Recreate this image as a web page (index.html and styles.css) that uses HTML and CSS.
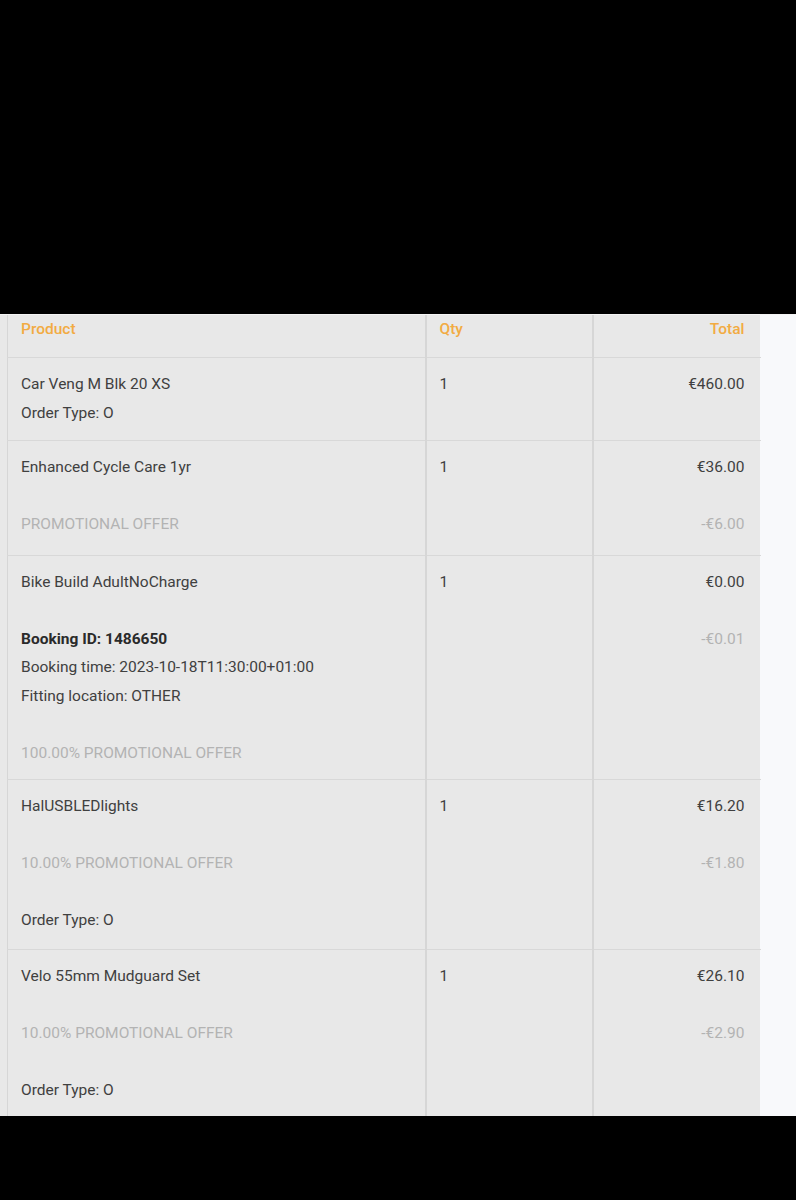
FILE: index.html
```html
<!DOCTYPE html>
<html lang="en">
<head>
<meta charset="utf-8">
<title>Order items</title>
<link rel="stylesheet" href="styles.css">
</head>
<body>
<div class="bar-top"></div>
<div class="screen">
  <div class="sheet">
    <table class="items">
      <colgroup>
        <col class="c-prod"><col class="c-qty"><col class="c-total">
      </colgroup>
      <thead>
        <tr>
          <th class="prod">Product</th>
          <th class="qty">Qty</th>
          <th class="total">Total</th>
        </tr>
      </thead>
      <tbody>
        <tr>
          <td class="prod">
            <div class="ln">Car Veng M Blk 20 XS</div>
            <div class="ln">Order Type: O</div>
          </td>
          <td class="qty"><div class="ln">1</div></td>
          <td class="total"><div class="ln">€460.00</div></td>
        </tr>
        <tr class="r2">
          <td class="prod">
            <div class="ln">Enhanced Cycle Care 1yr</div>
            <div class="gap"></div>
            <div class="ln promo">PROMOTIONAL OFFER</div>
          </td>
          <td class="qty"><div class="ln">1</div></td>
          <td class="total">
            <div class="ln">€36.00</div>
            <div class="gap"></div>
            <div class="ln promo">-€6.00</div>
          </td>
        </tr>
        <tr class="r3">
          <td class="prod">
            <div class="ln">Bike Build AdultNoCharge</div>
            <div class="gap"></div>
            <div class="ln strong">Booking ID: 1486650</div>
            <div class="ln">Booking time: 2023-10-18T11:30:00+01:00</div>
            <div class="ln">Fitting location: OTHER</div>
            <div class="gap"></div>
            <div class="ln promo">100.00% PROMOTIONAL OFFER</div>
          </td>
          <td class="qty"><div class="ln">1</div></td>
          <td class="total">
            <div class="ln">€0.00</div>
            <div class="gap"></div>
            <div class="ln promo">-€0.01</div>
          </td>
        </tr>
        <tr class="r4">
          <td class="prod">
            <div class="ln">HalUSBLEDlights</div>
            <div class="gap"></div>
            <div class="ln promo">10.00% PROMOTIONAL OFFER</div>
            <div class="gap"></div>
            <div class="ln">Order Type: O</div>
          </td>
          <td class="qty"><div class="ln">1</div></td>
          <td class="total">
            <div class="ln">€16.20</div>
            <div class="gap"></div>
            <div class="ln promo">-€1.80</div>
          </td>
        </tr>
        <tr>
          <td class="prod">
            <div class="ln">Velo 55mm Mudguard Set</div>
            <div class="gap"></div>
            <div class="ln promo">10.00% PROMOTIONAL OFFER</div>
            <div class="gap"></div>
            <div class="ln">Order Type: O</div>
          </td>
          <td class="qty"><div class="ln">1</div></td>
          <td class="total">
            <div class="ln">€26.10</div>
            <div class="gap"></div>
            <div class="ln promo">-€2.90</div>
          </td>
        </tr>
      </tbody>
    </table>
  </div>
</div>
<div class="bar-bottom"></div>
</body>
</html>
```

FILE: styles.css
```css
html, body {
  margin: 0;
  padding: 0;
  background: #000;
}
body {
  width: 796px;
  height: 1200px;
  overflow: hidden;
  font-family: Roboto, "Liberation Sans", sans-serif;
}
.bar-top {
  height: 314px;
  background: #000;
}
.screen {
  height: 801px;
  border-top: 1px solid #f4f4f4;
  background: #f8f9fb;
  overflow: hidden;
}
.sheet {
  width: 760px;
  min-height: 100%;
  background: #e8e8e8;
  padding-left: 7px;
  box-sizing: border-box;
}
.bar-bottom {
  height: 84px;
  background: #000;
}
.items {
  width: 753px;
  border-collapse: collapse;
  table-layout: fixed;
  border-left: 1px solid #d6d6d6;
  font-size: 15.5px;
  color: #404040;
}
.c-prod { width: 418px; }
.c-qty { width: 167px; }
.c-total { width: 168px; }
.items th,
.items td {
  vertical-align: top;
  padding: 12px 16px 13px 13px;
  border-bottom: 1px solid #d8d8d8;
}
.items th.prod, .items td.prod,
.items th.qty, .items td.qty {
  border-right: 2px solid #d6d6d6;
}
.items th {
  font-weight: 500;
  color: #f2ab42;
  line-height: 28px;
  padding-top: 0;
  padding-bottom: 14px;
  text-align: left;
}
.items th.total, .items td.total {
  text-align: right;
}
.ln {
  line-height: 28.5px;
  white-space: nowrap;
}
.gap { height: 28.5px; }
.promo { color: #b3b3b3; }
.strong { font-weight: 700; color: #2a2a2a; }
.r2 td { padding-bottom: 16px; }
.r3 td { padding-bottom: 12px; }
.r4 td { padding-bottom: 14px; }
```
